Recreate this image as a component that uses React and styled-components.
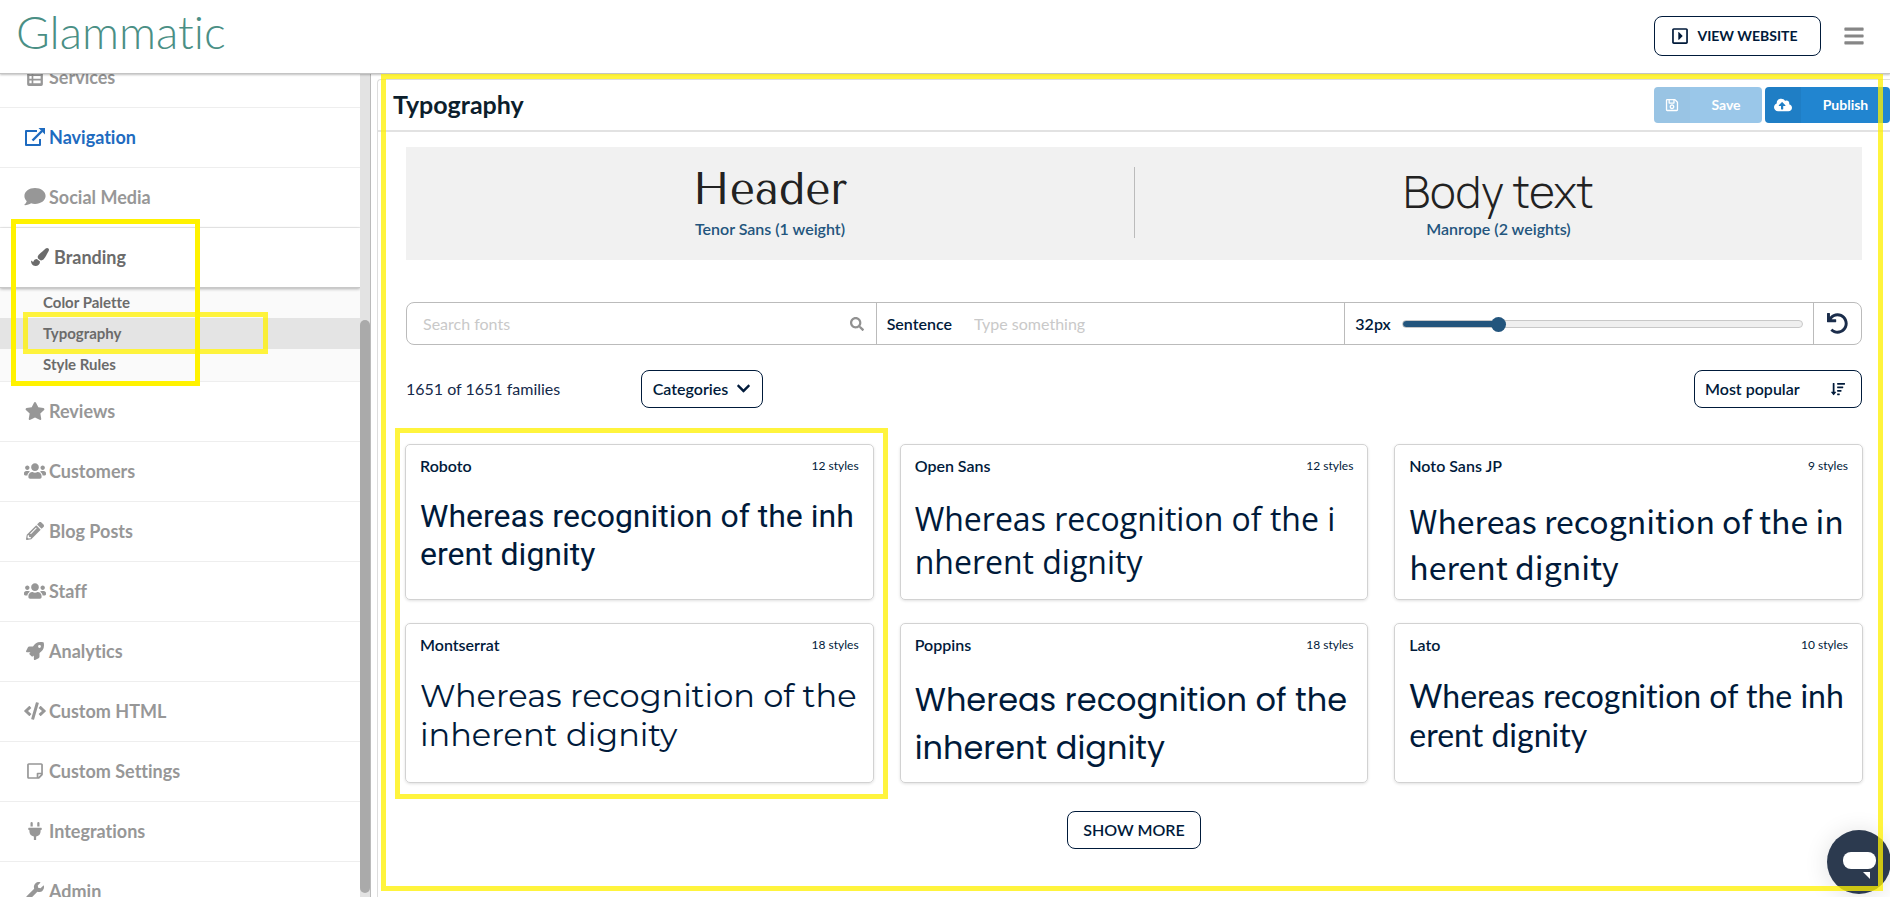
import React, { useState } from 'react';
import styled, { createGlobalStyle, css } from 'styled-components';
import {
    FaBars, FaChevronDown, FaCloudUploadAlt, FaCode,
    FaPaintBrush, FaPencilAlt, FaPlug, FaRegCaretSquareRight, FaRegSave, FaRegStickyNote,
    FaRocket, FaSearch, FaSortAmountDown, FaStar, FaUndo, FaUsers, FaWrench
} from 'react-icons/fa';

const navy = '#001a3a';
const steel = '#23557d';

const GlobalStyle = createGlobalStyle`
    * {
        box-sizing: border-box;
    }
    body {
        margin: 0;
        background: #fff;
        color: ${navy};
        font-family: Lato, 'Liberation Sans', sans-serif;
        font-size: 16px;
        font-variant-ligatures: none;
    }
    button, input {
        font: inherit;
        color: inherit;
    }
`

const Page = styled.div`
    position: relative;
    display: flex;
    flex-direction: column;
    height: 100vh;
    padding-right: 4px;
    overflow: hidden;
`

const TopBar = styled.header`
    position: relative;
    z-index: 1;
    display: flex;
    align-items: center;
    flex: none;
    height: 74px;
    padding: 0 25px 1px 16px;
    background: #fff;
    border-bottom: 1px solid #c4c4c4;
    box-shadow: 0 1px 2px rgba(0, 0, 0, 0.25);
`

const Logo = styled.a`
    margin-right: auto;
    padding-bottom: 8px;
    color: #4a8f85;
    font-size: 46px;
    font-weight: 300;
    line-height: 46px;
    text-decoration: none;
`

const OutlineButton = styled.button`
    display: inline-flex;
    align-items: center;
    justify-content: ${props => props.$spread ? 'space-between' : 'center'};
    gap: 8px;
    width: ${props => props.$width}px;
    height: ${props => props.$tall ? 40 : 38}px;
    padding: 0 ${props => props.$spread || props.$tall ? 16 : 10}px 1px 10px;
    background: #fff;
    border: 1px solid ${navy};
    border-radius: 8px;
    font-size: ${props => props.$tall ? 14 : 16}px;
    font-weight: ${props => props.$tall ? 700 : 600};
    cursor: pointer;
`

const MenuButton = styled.button`
    display: flex;
    margin-left: 22px;
    padding: 0;
    background: none;
    border: 0;
    color: #868686;
    font-size: 22px;
`

const Body = styled.div`
    display: flex;
    flex: 1;
    min-height: 0;
`

const Sidebar = styled.nav`
    display: flex;
    flex: none;
    width: 371px;
    border-right: 1px solid #bbb;
`

const MenuViewport = styled.div`
    display: flex;
    flex: 1;
    flex-direction: column;
    overflow: hidden;
`

const MenuList = styled.ul`
    flex: none;
    margin: -26px 0 0;
    padding: 0;
    list-style: none;
`

const MenuLink = styled.a`
    display: flex;
    align-items: center;
    height: 60px;
    padding: 0 0 1px 24px;
    border-bottom: 1px solid #eee;
    color: #979797;
    font-size: 18px;
    font-weight: 700;
    text-decoration: none;
    svg {
        width: 22px;
        height: 18px;
        margin-right: 3px;
    }
    ${props => props.$current && css`
        color: #1e6bc0;
    `}
    ${props => props.$open && css`
        position: relative;
        padding-left: 29px;
        border-bottom-color: #c8c8c8;
        box-shadow: 0 1px 3px rgba(0, 0, 0, 0.3);
        color: #6b6b6b;
    `}
`

const SubMenu = styled.ul`
    margin: -1px 0 0;
    padding: 0 0 1px;
    background: #fafafa;
    border-bottom: 1px solid #eee;
    list-style: none;
`

const SubLink = styled.a`
    display: block;
    padding-left: 43px;
    background: ${props => props.$active ? '#e4e4e4' : 'transparent'};
    color: #6b6b6b;
    font-size: 15px;
    font-weight: 700;
    line-height: 31px;
    text-decoration: none;
`

const ScrollTrack = styled.div`
    display: flex;
    flex-direction: column;
    flex: none;
    width: 10px;
    padding: 246px 0 4px;
    background: #e3e3e3;
`

const ScrollThumb = styled.div`
    flex: 1;
    background: #aaa;
    border-radius: 5px;
`

const Main = styled.main`
    flex: 1;
    min-width: 0;
    margin: 5px 0 0 6px;
    border: 1px solid #ddd;
    border-width: 1px 0 0 1px;
    border-top-left-radius: 4px;
`

const TitleBar = styled.div`
    display: flex;
    align-items: center;
    height: 52px;
    padding-left: 15px;
    border-bottom: 2px solid #e2e2e2;
`

const Title = styled.h1`
    margin: 0 auto 0 0;
    padding-bottom: 2px;
    color: #0c1e2c;
    font-size: 25px;
    font-weight: 700;
    line-height: 30px;
`

const ActionButton = styled.button`
    display: flex;
    width: ${props => props.$width}px;
    height: 36px;
    margin-left: 3px;
    padding: 0;
    overflow: hidden;
    background: #2185d0;
    border: 0;
    border-radius: 4px;
    color: #fff;
    font-size: 14px;
    font-weight: 700;
    line-height: 36px;
    opacity: ${props => props.disabled ? 0.45 : 1};
    span {
        flex: 1;
    }
`

const ActionIcon = styled.i`
    display: flex;
    align-items: center;
    justify-content: center;
    width: 36px;
    height: 36px;
    background: rgba(0, 0, 0, 0.05);
    font-size: ${props => props.$size}px;
`

const Content = styled.div`
    padding: 15px 27px 0;
`

const Preview = styled.section`
    display: grid;
    grid-template-columns: 1fr 1fr;
    margin: 0 1px;
    padding: 20px 0 22px;
    background: #f1f1f1;
`

const PreviewItem = styled.div`
    display: flex;
    flex-direction: column;
    align-items: center;
    height: 71px;
    color: #222;
    & + & {
        border-left: 1px solid #bbb;
    }
`

const PreviewText = styled.div`
    flex: none;
    height: 51px;
    font-family: ${props => props.$font}, sans-serif;
    font-size: 44px;
    font-weight: ${props => props.$weight};
    line-height: ${props => props.$line}px;
`

const PreviewFont = styled.div`
    flex: none;
    color: ${steel};
    font-weight: 600;
    line-height: 22px;
`

const FilterBar = styled.div`
    display: grid;
    grid-template-columns: 1fr 1fr 1fr 48px;
    height: 43px;
    margin: 42px 1px 0;
    overflow: hidden;
    border: 1px solid #bbb;
    border-radius: 8px;
`

const FilterCell = styled.div`
    display: flex;
    align-items: center;
    gap: ${props => props.$gap || 11}px;
    min-width: 0;
    padding: 0 ${props => props.$right || 10}px 0 ${props => props.$left || 10}px;
    & + & {
        border-left: 1px solid #bbb;
    }
    label {
        font-weight: 600;
    }
    svg {
        flex: none;
    }
`

const TextInput = styled.input`
    flex: 1;
    min-width: 0;
    padding: 0;
    background: none;
    border: 0;
    outline: 0;
    &::placeholder {
        color: #c9c9c9;
        opacity: 1;
    }
`

const Slider = styled.input`
    flex: 1;
    min-width: 0;
    height: 16px;
    margin: 0;
    appearance: none;
    background: none;
    &::-webkit-slider-runnable-track {
        height: 8px;
        border: 1px solid #c8c8c8;
        border-radius: 4px;
        background: linear-gradient(to right, ${steel} ${props => props.$fill}%, #efefef ${props => props.$fill}%);
    }
    &::-webkit-slider-thumb {
        appearance: none;
        width: 15px;
        height: 15px;
        margin-top: -4px;
        border-radius: 50%;
        background: ${steel};
    }
`

const ResetButton = styled.button`
    display: flex;
    align-items: center;
    justify-content: center;
    padding: 0;
    background: none;
    border: 0;
    border-left: 1px solid #bbb;
    color: #1b2d4b;
    font-size: 21px;
`

const ListHeader = styled.div`
    display: flex;
    align-items: center;
    margin: 25px 1px 0;
`

const Count = styled.div`
    width: 235px;
    padding-bottom: 2px;
    color: #14294a;
`

const Spacer = styled.div`
    flex: 1;
`

const CardGrid = styled.div`
    display: grid;
    grid-template-columns: repeat(3, 1fr);
    gap: 23px 26px;
    margin-top: 36px;
`

const Card = styled.article`
    min-width: 0;
    padding: 10px 14px;
    border: 1px solid #d2d2d2;
    border-radius: 5px;
    box-shadow: 0 1px 3px rgba(0, 0, 0, 0.12);
`

const CardHead = styled.div`
    display: flex;
    align-items: center;
    justify-content: space-between;
    line-height: 22px;
`

const FontName = styled.h2`
    margin: 0;
    font-size: 16px;
    font-weight: 600;
`

const StyleCount = styled.span`
    font-size: 12px;
`

const Sample = styled.p`
    margin: 20px 0 0;
    font-family: ${props => props.$font}, sans-serif;
    font-size: 32px;
    line-height: ${props => props.$line}px;
    white-space: pre;
`

const MoreRow = styled.div`
    display: flex;
    justify-content: center;
    margin-top: 28px;
`

const ChatButton = styled.button`
    position: absolute;
    right: 3px;
    bottom: 3px;
    width: 64px;
    height: 64px;
    padding: 0;
    background: #2c3a4f;
    border: 0;
    border-radius: 50%;
    box-shadow: 0 2px 24px rgba(0, 0, 0, 0.12);
`

const RightEdge = styled.div`
    position: absolute;
    z-index: 1;
    top: 0;
    right: 0;
    bottom: 0;
    width: 4px;
    background: #fff;
`

// hand-placed annotation frames laid over the page
const Highlight = styled.div`
    position: absolute;
    z-index: 2;
    left: ${props => props.$left}px;
    top: ${props => props.$top}px;
    ${props => props.$right ? `right: ${props.$right}px;` : `width: ${props.$width}px;`}
    ${props => props.$bottom ? `bottom: ${props.$bottom}px;` : `height: ${props.$height}px;`}
    border: 5px solid ${props => props.$solid ? '#fff200' : 'rgba(255, 240, 0, 0.76)'};
    pointer-events: none;
`

function ListIcon() {
    return (
        <svg viewBox="0 0 14 16" fill="currentColor" fillRule="evenodd">
            <path d="M1.5 0h11A1.5 1.5 0 0 1 14 1.5v13a1.5 1.5 0 0 1-1.5 1.5h-11A1.5 1.5 0 0 1 0 14.5v-13A1.5 1.5 0 0 1 1.5 0zM2 3v2.5h2V3zM5.5 3v2.5H12V3zM2 7v2.5h2V7zM5.5 7v2.5H12V7zM2 11v2.5h2V11zM5.5 11v2.5H12V11z" />
        </svg>
    );
}

function ExternalIcon() {
    return (
        <svg viewBox="0 0 20 18" fill="none" stroke="currentColor" strokeWidth="2">
            <path d="M12 3H1v14h14v-6" strokeLinejoin="round" />
            <path d="M7.5 12.5L17 3" strokeWidth="2.4" />
            <path d="M13.5 0H20v6.5z" fill="currentColor" stroke="none" />
        </svg>
    );
}

function CommentIcon() {
    return (
        <svg viewBox="0 0 20 17" fill="currentColor">
            <path d="M10 0c5.5 0 10 3.3 10 7.5S15.5 15 10 15c-1.3 0-2.6-.2-3.7-.5C4.8 15.5 2.700 16.2.5 16.2c-.5 0-.6-.5-.3-.8.9-.9 1.7-2 2-3C.8 11.1 0 9.4 0 7.5 0 3.3 4.5 0 10 0z" />
        </svg>
    );
}

const menu = [
    { name: 'Services', icon: ListIcon },
    { name: 'Navigation', icon: ExternalIcon, current: true },
    { name: 'Social Media', icon: CommentIcon },
    { name: 'Branding', icon: FaPaintBrush, items: ['Color Palette', 'Typography', 'Style Rules'] },
    { name: 'Reviews', icon: FaStar },
    { name: 'Customers', icon: FaUsers },
    { name: 'Blog Posts', icon: FaPencilAlt },
    { name: 'Staff', icon: FaUsers },
    { name: 'Analytics', icon: FaRocket },
    { name: 'Custom HTML', icon: FaCode },
    { name: 'Custom Settings', icon: FaRegStickyNote },
    { name: 'Integrations', icon: FaPlug },
    { name: 'Admin', icon: FaWrench }
];

const fonts = [
    { name: 'Roboto', styles: 12, font: 'Roboto', line: 38, text: 'Whereas recognition of the inh\nerent dignity' },
    { name: 'Open Sans', styles: 12, font: "'Open Sans'", line: 43, text: 'Whereas recognition of the i\nnherent dignity' },
    { name: 'Noto Sans JP', styles: 9, font: "'Noto Sans CJK JP'", line: 46, text: 'Whereas recognition of the in\nherent dignity' },
    { name: 'Montserrat', styles: 18, font: 'Montserrat, Inter', line: 39, text: 'Whereas recognition of the\ninherent dignity' },
    { name: 'Poppins', styles: 18, font: 'Poppins, Inter', line: 48, text: 'Whereas recognition of the\ninherent dignity' },
    { name: 'Lato', styles: 10, font: 'Lato', line: 39, text: 'Whereas recognition of the inh\nerent dignity' }
];

function SideMenu() {
    return (
        <Sidebar>
            <MenuViewport>
                <MenuList>
                    {menu.map(item => {
                        const Icon = item.icon;
                        return (
                            <li key={item.name}>
                                <MenuLink href="#" $current={item.current} $open={!!item.items}>
                                    <Icon />
                                    {item.name}
                                </MenuLink>
                                {item.items && (
                                    <SubMenu>
                                        {item.items.map(sub => (
                                            <li key={sub}>
                                                <SubLink href="#" $active={sub === 'Typography'}>{sub}</SubLink>
                                            </li>
                                        ))}
                                    </SubMenu>
                                )}
                            </li>
                        );
                    })}
                </MenuList>
            </MenuViewport>
            <ScrollTrack>
                <ScrollThumb />
            </ScrollTrack>
        </Sidebar>
    );
}

function Filters() {
    const [size, setSize] = useState(32);

    return (
        <FilterBar>
            <FilterCell $left={16} $right={12}>
                <TextInput aria-label="Search fonts" placeholder="Search fonts" />
                <FaSearch size={14} color="#919191" />
            </FilterCell>
            <FilterCell $gap={22}>
                <label htmlFor="sentence">Sentence</label>
                <TextInput id="sentence" placeholder="Type something" />
            </FilterCell>
            <FilterCell>
                <label htmlFor="size">{size}px</label>
                <Slider
                    id="size"
                    type="range"
                    min="8"
                    max="112"
                    value={size}
                    $fill={Math.round((size - 8) / 104 * 100)}
                    onChange={e => setSize(Number(e.target.value))}
                />
            </FilterCell>
            <ResetButton aria-label="Reset" onClick={() => setSize(32)}>
                <FaUndo />
            </ResetButton>
        </FilterBar>
    );
}

function FontCard(props) {
    const { item } = props;

    return (
        <Card>
            <CardHead>
                <FontName>{item.name}</FontName>
                <StyleCount>{item.styles} styles</StyleCount>
            </CardHead>
            <Sample $font={item.font} $line={item.line}>{item.text}</Sample>
        </Card>
    );
}

function App() {
    return (
        <Page>
            <GlobalStyle />
            <TopBar>
                <Logo href="#">Glammatic</Logo>
                <OutlineButton $width={167} $tall>
                    <FaRegCaretSquareRight size={18} />
                    VIEW WEBSITE
                </OutlineButton>
                <MenuButton aria-label="Menu">
                    <FaBars />
                </MenuButton>
            </TopBar>
            <Body>
                <SideMenu />
                <Main>
                    <TitleBar>
                        <Title>Typography</Title>
                        <ActionButton $width={108} disabled>
                            <ActionIcon $size={14}><FaRegSave /></ActionIcon>
                            <span>Save</span>
                        </ActionButton>
                        <ActionButton $width={125}>
                            <ActionIcon $size={18}><FaCloudUploadAlt /></ActionIcon>
                            <span>Publish</span>
                        </ActionButton>
                    </TitleBar>
                    <Content>
                        <Preview>
                            <PreviewItem>
                                <PreviewText $font="'Tenor Sans', Lato" $weight={400} $line={46}>Header</PreviewText>
                                <PreviewFont>Tenor Sans (1 weight)</PreviewFont>
                            </PreviewItem>
                            <PreviewItem>
                                <PreviewText $font="Manrope, Inter" $weight={300} $line={48}>Body text</PreviewText>
                                <PreviewFont>Manrope (2 weights)</PreviewFont>
                            </PreviewItem>
                        </Preview>
                        <Filters />
                        <ListHeader>
                            <Count>1651 of 1651 families</Count>
                            <OutlineButton $width={122}>
                                Categories
                                <FaChevronDown size={15} />
                            </OutlineButton>
                            <Spacer />
                            <OutlineButton $width={168} $spread>
                                Most popular
                                <FaSortAmountDown size={14} />
                            </OutlineButton>
                        </ListHeader>
                        <CardGrid>
                            {fonts.map(item => <FontCard key={item.name} item={item} />)}
                        </CardGrid>
                        <MoreRow>
                            <OutlineButton $width={134}>SHOW MORE</OutlineButton>
                        </MoreRow>
                    </Content>
                </Main>
            </Body>
            <ChatButton aria-label="Open chat">
                <svg width="64" height="64" viewBox="0 0 64 64" fill="#fff">
                    <rect x="16" y="22" width="33" height="17" rx="8" />
                    <path d="M36 42h7v7z" />
                </svg>
            </ChatButton>
            <RightEdge />
            <Highlight $left={381} $top={74} $right={11} $bottom={6} />
            <Highlight $left={395} $top={428} $width={493} $height={371} />
            <Highlight $left={23} $top={312} $width={245} $height={42} />
            <Highlight $left={11} $top={219} $width={189} $height={167} $solid />
        </Page>
    );
}

export default App;
